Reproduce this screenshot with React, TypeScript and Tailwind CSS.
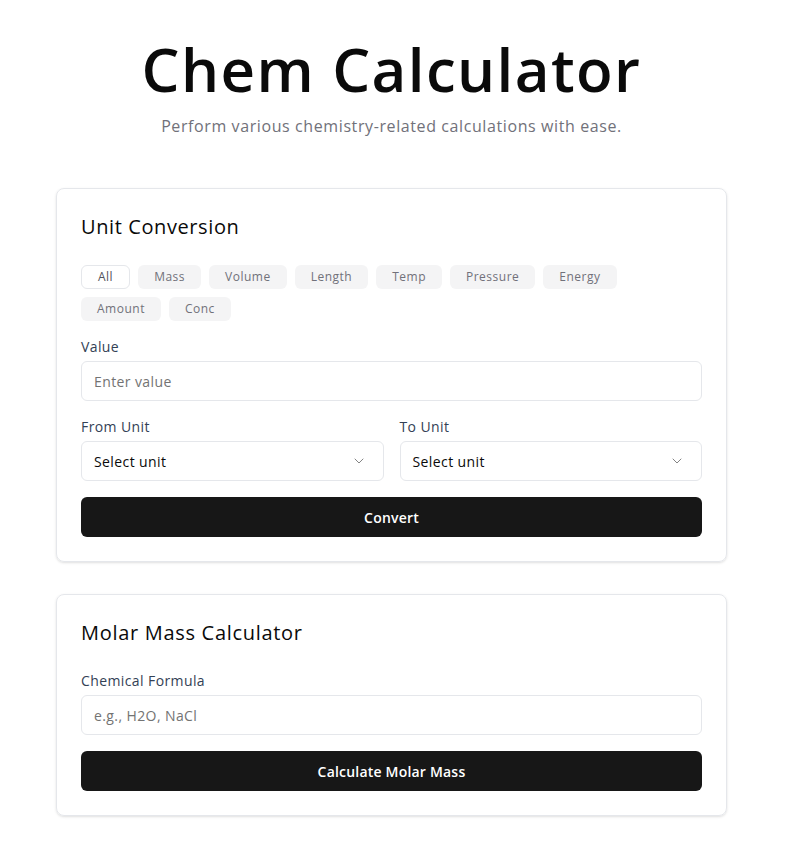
import React from "react";
import { ChevronDown } from "lucide-react";

const row1 = ["All", "Mass", "Volume", "Length", "Temp", "Pressure", "Energy"];
const row2 = ["Amount", "Conc"];

function Label({ children }: { children: React.ReactNode }) {
  return <div className="text-[14px] leading-5 font-medium text-[#334155] mb-1 tracking-[0.4px]">{children}</div>;
}

function Select() {
  return (
    <div className="h-10 rounded-md border border-[#e5e7eb] flex items-center justify-between px-3 text-[14px] text-[#0a0a0a] tracking-[0.4px]">
      <span>Select unit</span>
      <ChevronDown className="w-4 h-4 text-[#0a0a0a] opacity-50 mr-1" strokeWidth={1.5} />
    </div>
  );
}

function Pill({ p, active }: { p: string; active?: boolean }) {
  return (
    <div
      className={
        active
          ? "h-6 px-4 rounded-md border border-[#e5e7eb] bg-white text-[12px] flex items-center text-[#52525b] tracking-[0.5px]"
          : "h-6 px-4 rounded-md bg-[#f4f4f5] text-[12px] flex items-center text-[#71717a] tracking-[0.5px]"
      }
    >
      {p}
    </div>
  );
}

export default function App() {
  return (
    <div className="w-[783px] bg-white pb-[34px]" style={{ fontFamily: '"Open Sans", sans-serif' }}>
      <div className="w-[671px] mx-auto">
        <div className="pt-[35px] text-center">
          <h1 className="text-[60px] leading-[68px] font-semibold text-[#0a0a0a] tracking-[1.4px]">Chem Calculator</h1>
          <p className="mt-[11px] text-[16px] leading-6 text-[#71717a] tracking-[0.6px]">Perform various chemistry-related calculations with ease.</p>
        </div>

        <div className="mt-[50px] border border-[#e5e7eb] rounded-lg p-6 shadow-sm">
          <h2 className="text-[20px] leading-7 font-medium text-[#0a0a0a] tracking-[0.6px]">Unit Conversion</h2>
          <div className="mt-6 flex flex-col gap-2">
            <div className="flex gap-2">
              {row1.map((p, i) => (
                <Pill key={p} p={p} active={i === 0} />
              ))}
            </div>
            <div className="flex gap-2">
              {row2.map((p) => (
                <Pill key={p} p={p} />
              ))}
            </div>
          </div>
          <div className="mt-4">
            <Label>Value</Label>
            <div className="h-10 rounded-md border border-[#e5e7eb] flex items-center px-3 text-[14px] text-[#737373] tracking-[0.4px]">Enter value</div>
          </div>
          <div className="mt-4 grid grid-cols-2 gap-4">
            <div>
              <Label>From Unit</Label>
              <Select />
            </div>
            <div>
              <Label>To Unit</Label>
              <Select />
            </div>
          </div>
          <button className="mt-4 w-full h-10 rounded-md bg-[#171717] text-white text-[14px] font-semibold tracking-[0.2px]">Convert</button>
        </div>

        <div className="mt-8 border border-[#e5e7eb] rounded-lg p-6 shadow-sm">
          <h2 className="text-[20px] leading-7 font-medium text-[#0a0a0a] tracking-[0.7px]">Molar Mass Calculator</h2>
          <div className="mt-6">
            <Label>Chemical Formula</Label>
            <div className="h-10 rounded-md border border-[#e5e7eb] flex items-center px-3 text-[14px] text-[#737373] tracking-[0.4px]">e.g., H2O, NaCl</div>
          </div>
          <button className="mt-4 w-full h-10 rounded-md bg-[#171717] text-white text-[14px] font-semibold tracking-[0.2px]">Calculate Molar Mass</button>
        </div>
      </div>
    </div>
  );
}
